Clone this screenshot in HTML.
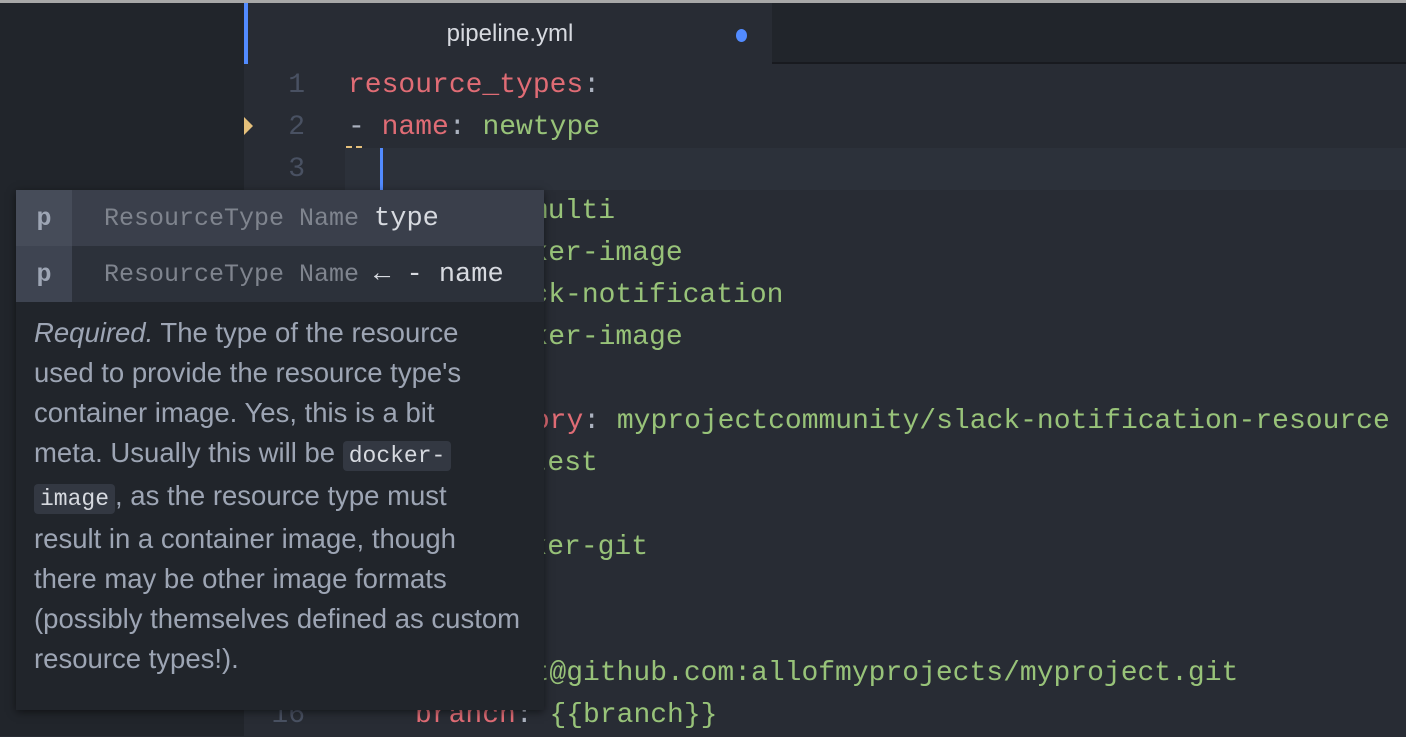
<!DOCTYPE html><html><head><style>
body{margin:0;width:1406px;height:736px;overflow:hidden;background:#282c34;position:relative;font-family:"Liberation Sans",sans-serif}
.top{position:absolute;left:0;top:0;width:1406px;height:3px;background:#a8a8a8}
.side{position:absolute;left:0;top:3px;width:244px;height:733px;background:#21252b}
.tabs{position:absolute;left:244px;top:3px;width:1162px;height:59px;background:#21252b;border-bottom:2px solid #181a1f}
.tab{position:absolute;left:244px;top:3px;width:528px;height:61px;background:#282c34;border-left:4px solid #528bff;box-sizing:border-box;color:#d7dae0;font-size:24px;text-align:center;line-height:62px}
.dot{position:absolute;left:736px;top:29px;width:11px;height:13px;border-radius:50%;background:#528bff}
.cl{position:absolute;left:345px;top:148px;width:1061px;height:42px;background:#2c313a}
.cur{position:absolute;left:380px;top:148px;width:3px;height:42px;background:#528bff}
.code{position:absolute;left:0;top:65px;font-family:"Liberation Mono",monospace;font-size:28px}
.ln{position:absolute;width:305px;text-align:right;color:#495162;height:42px;line-height:42px}
.l{position:absolute;left:348px;height:42px;line-height:42px;white-space:pre;color:#abb2bf}
.r{color:#e06c75}.g{color:#98c379}
.pop{position:absolute;left:16px;top:190px;width:528px;height:520px;background:#21252b;box-shadow:0 2px 8px rgba(0,0,0,.5)}
.row{position:absolute;left:0;width:528px;height:56px;font-family:"Liberation Mono",monospace;font-size:25px;line-height:58px}
.ic{position:absolute;left:0;top:0;width:56px;height:56px;background:#3e4451;color:#9da5b4;text-align:center;font-weight:bold}
.rt{position:absolute;left:88px;color:#7f848e;white-space:pre}
.rt b{font-weight:normal;color:#d7dae0;font-size:27px}
.desc{position:absolute;left:18px;top:123px;font-size:27.5px;line-height:40px;color:#9da5b4;white-space:pre}
.cd{font-family:"Liberation Mono",monospace;background:#333842;color:#d7dae0;border-radius:4px;padding:2px 6px;font-size:23px}
</style></head><body>
<div class="top"></div><div class="side"></div><div class="tabs"></div>
<div class="tab">pipeline.yml</div><div class="dot"></div>
<div class="cl"></div>
<div style="position:absolute;left:244px;top:117px;width:0;height:0;border-top:9px solid transparent;border-bottom:9px solid transparent;border-left:9px solid #e5c07b"></div>
<div style="position:absolute;left:346px;top:146px;width:16px;height:2px;border-top:2px dashed #e5c07b"></div>
<div class="code">
<div class="ln" style="top:0">1</div><div class="ln" style="top:42px">2</div><div class="ln" style="top:84px">3</div><div class="ln" style="top:630px">16</div>
<div class="l" style="top:0"><span class="r">resource_types</span>:</div>
<div class="l" style="top:42px">- <span class="r">name</span>: <span class="g">newtype</span></div>
<div class="l g" style="top:126px;left:531px">multi</div>
<div class="l g" style="top:168px;left:481px">docker-image</div>
<div class="l g" style="top:210px;left:481px">slack-notification</div>
<div class="l g" style="top:252px;left:481px">docker-image</div>
<div class="l" style="top:336px">    <span class="r">repository</span>: <span class="g">myprojectcommunity/slack-notification-resource</span></div>
<div class="l g" style="top:378px;left:497px">latest</div>
<div class="l g" style="top:462px;left:480px">docker-git</div>
<div class="l g" style="top:588px;left:499px">git@github.com:allofmyprojects/myproject.git</div>
<div class="l" style="top:630px;left:415px"><span class="r">branch</span>: <span class="g">{{branch}}</span></div>
</div>
<div class="cur"></div>
<div class="pop">
<div class="row" style="top:0;background:#3a3f4b"><div class="ic" style="background:#464c59">p</div><div class="rt">ResourceType Name <b>type</b></div></div>
<div class="row" style="top:56px;background:#2c313a"><div class="ic">p</div><div class="rt">ResourceType Name <b>← - name</b></div></div>
<div class="desc"><i>Required.</i> The type of the resource
used to provide the resource type's
container image. Yes, this is a bit
meta. Usually this will be <span class="cd">docker-</span>
<span class="cd">image</span>, as the resource type must
result in a container image, though
there may be other image formats
(possibly themselves defined as custom
resource types!).</div>
</div>
</body></html>
